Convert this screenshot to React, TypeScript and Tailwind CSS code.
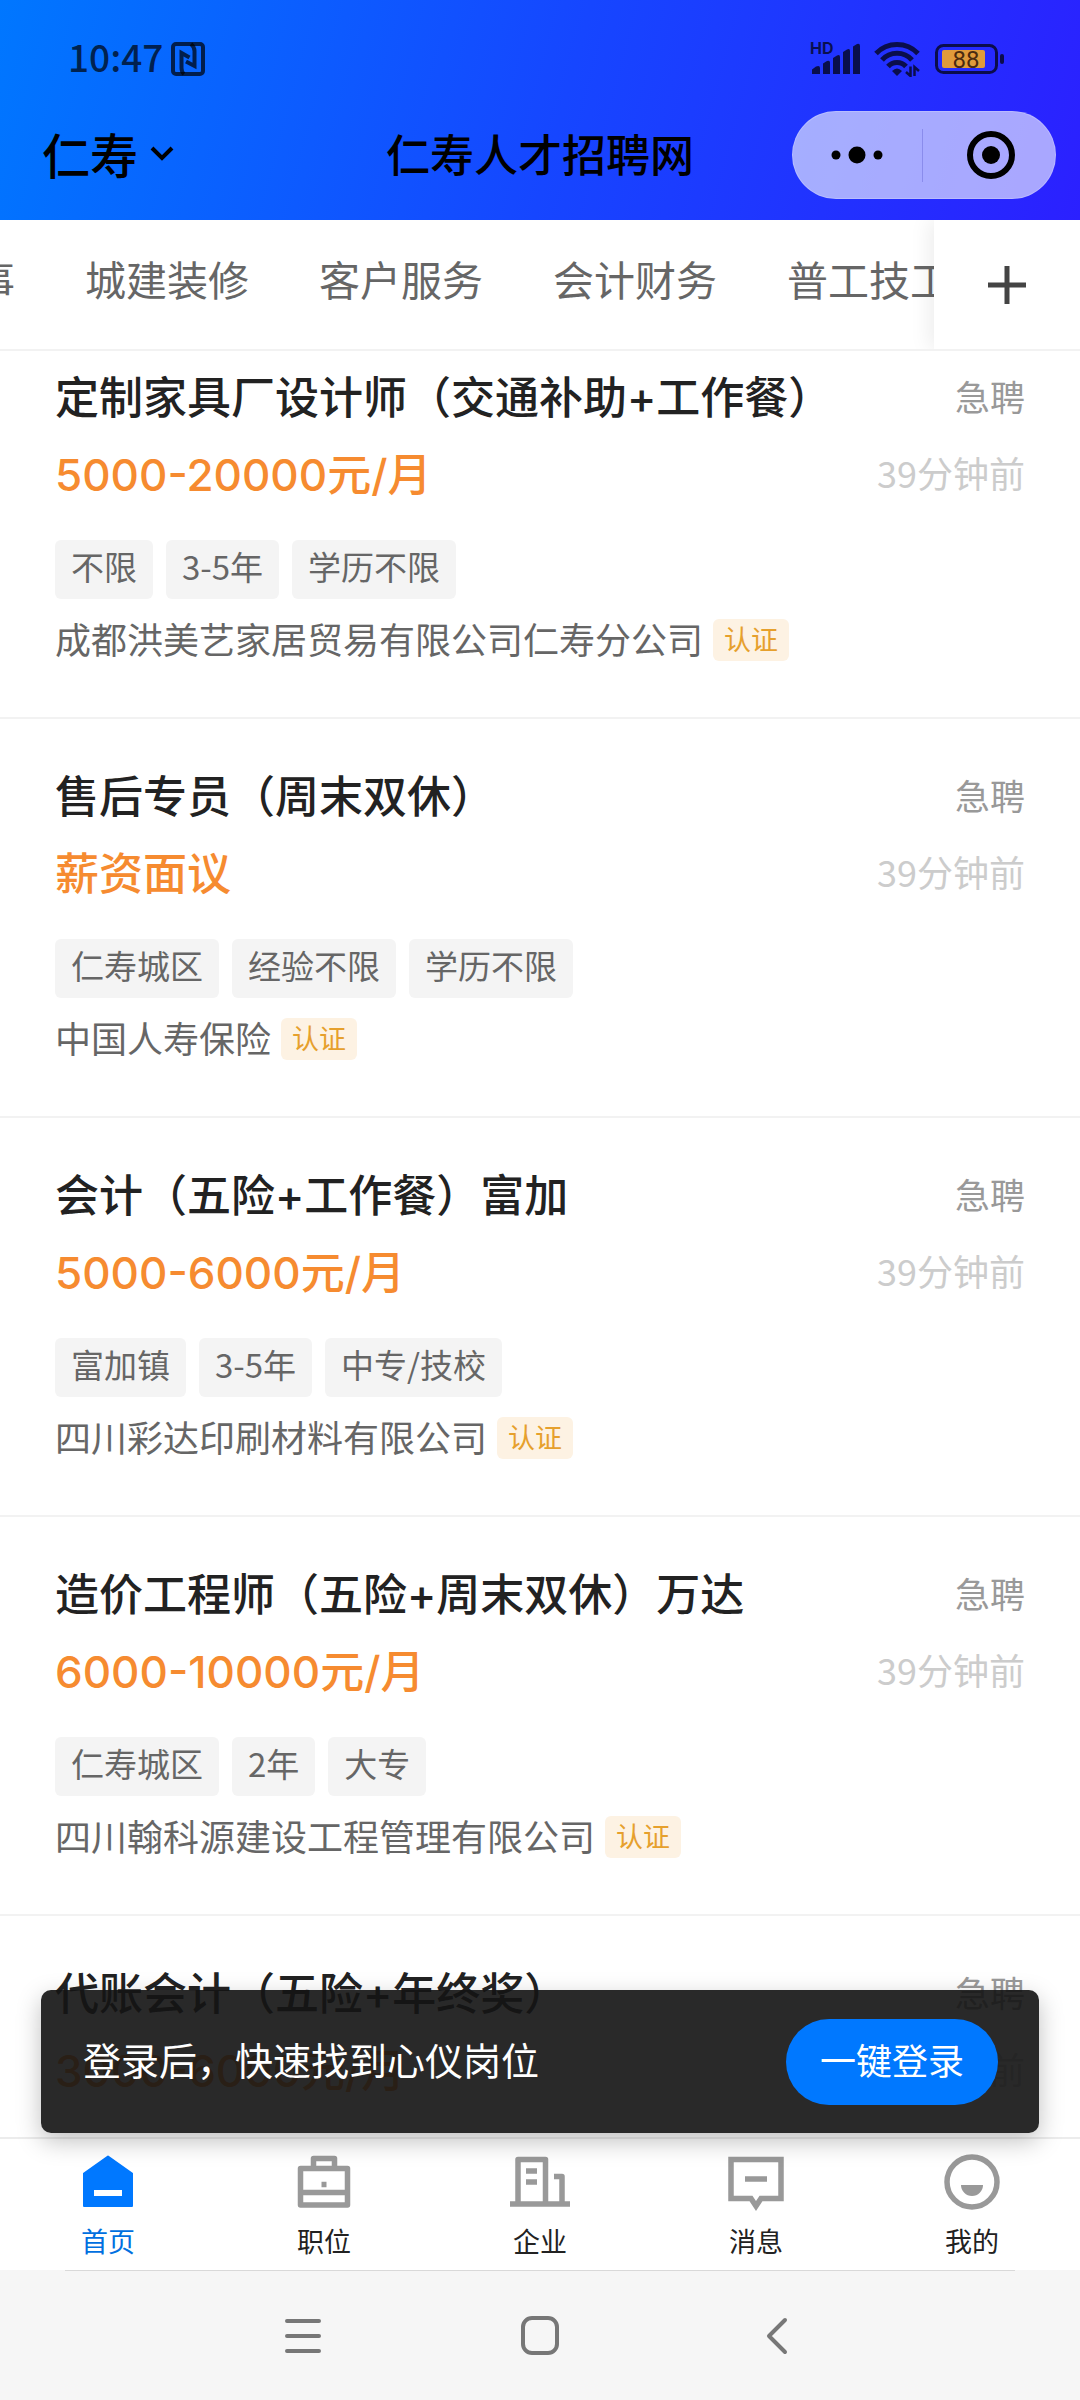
import { ReactNode } from "react";

type Job = {
  title: string;
  salary: string;
  tags: string[];
  company: string;
};

const categories = ["行政人事", "城建装修", "客户服务", "会计财务", "普工技工"];

const jobs: Job[] = [
  {
    title: "定制家具厂设计师（交通补助+工作餐）",
    salary: "5000-20000元/月",
    tags: ["不限", "3-5年", "学历不限"],
    company: "成都洪美艺家居贸易有限公司仁寿分公司",
  },
  {
    title: "售后专员（周末双休）",
    salary: "薪资面议",
    tags: ["仁寿城区", "经验不限", "学历不限"],
    company: "中国人寿保险",
  },
  {
    title: "会计（五险+工作餐）富加",
    salary: "5000-6000元/月",
    tags: ["富加镇", "3-5年", "中专/技校"],
    company: "四川彩达印刷材料有限公司",
  },
  {
    title: "造价工程师（五险+周末双休）万达",
    salary: "6000-10000元/月",
    tags: ["仁寿城区", "2年", "大专"],
    company: "四川翰科源建设工程管理有限公司",
  },
  {
    title: "代账会计（五险+年终奖）",
    salary: "3000-6000元/月",
    tags: [],
    company: "",
  },
];

function StatusBar() {
  return (
    <div className="flex h-[117px] items-center justify-between pr-[75px] pl-[68px] text-black/70">
      <div className="flex items-center gap-2">
        <span className="pb-1 text-[37px] leading-none font-medium">10:47</span>
        <svg className="h-[34px] w-[34px]" viewBox="0 0 34 34" fill="none" stroke="currentColor">
          <rect x="2" y="2" width="30" height="30" rx="3" strokeWidth="4" />
          <path d="M18.500 15.500L10.500 11V26Q10.500 30 13 32" strokeWidth="4" />
          <path d="M15 19.500L23.500 24V9Q23.500 5 20 2" strokeWidth="4" />
        </svg>
      </div>
      <div className="flex items-center gap-3.5">
        <svg className="h-9 w-[50px] overflow-visible" viewBox="0 0 50 36" fill="currentColor">
          <text x="0" y="13" fontSize="16" fontWeight="700" fontFamily="Inter, sans-serif">HD</text>
          <path d="M2 33V28.500L6 25.500Q10 24 10 27V33ZM13 33V22.500L17 20Q20 19 20 21.500V33ZM23 33V17L27 14.500Q30 13 30 16V33ZM33 33V11L37 8.500Q40 7 40 10V33ZM43 33V5.500L47 3Q50 2 50 5V33Z" />
        </svg>
        <svg className="h-9 w-[47px]" viewBox="0 0 47 36" fill="none" stroke="currentColor" strokeWidth="5">
          <path d="M2 12.500A29 29 0 0 1 44 12.500" />
          <path d="M8 19A20 20 0 0 1 38 19" />
          <path d="M14 25.500A12 12 0 0 1 32 25.500" />
          <path d="M18 30Q23 25 28 30L23 35Z" fill="currentColor" stroke="none" />
          <path d="M36.500 25.500V35L32 31M40.500 35V26L45 30" strokeWidth="2.500" />
        </svg>
        <svg className="h-[30px] w-[70px]" viewBox="0 0 70 30">
          <rect x="1.500" y="1.500" width="60" height="27" rx="7" fill="none" stroke="currentColor" strokeWidth="3" />
          <rect x="7" y="6" width="43" height="18" rx="2" fill="#e09b3b" />
          <rect x="65" y="10" width="4" height="10" rx="2" fill="currentColor" />
          <text x="31" y="23.500" fontSize="24" textAnchor="middle" fill="#4a2a10" fontFamily="Roboto, sans-serif">88</text>
        </svg>
      </div>
    </div>
  );
}

function Header() {
  return (
    <header className="h-[220px] bg-linear-[105deg] from-[#0077ff] via-[#1646ff] via-52% to-[#2b20ff]">
      <StatusBar />
      <div className="-mt-1.5 grid grid-cols-[1fr_auto_1fr] items-center px-6">
        <button className="ml-[18px] flex items-center gap-3 justify-self-start pb-1 text-5xl leading-none font-medium">
          仁寿
          <svg className="h-4 w-6" viewBox="0 0 24 16" fill="none" stroke="currentColor" strokeWidth="4">
            <path d="M2 3L12 13L22 3" />
          </svg>
        </button>
        <h1 className="pb-1 text-[44px] leading-none font-medium">仁寿人才招聘网</h1>
        <div className="flex h-[88px] w-[264px] items-center justify-self-end rounded-full border border-white/20 bg-white/60">
          <button className="flex h-full flex-1 items-center justify-center" aria-label="更多">
            <svg className="h-5 w-[52px]" viewBox="0 0 52 20" fill="currentColor">
              <circle cx="5" cy="10" r="4.500" />
              <circle cx="26" cy="10" r="8.500" />
              <circle cx="47" cy="10" r="4.500" />
            </svg>
          </button>
          <span className="h-[53px] w-px bg-[#8a8cec]" />
          <button className="flex h-full flex-1 items-center justify-center pl-1" aria-label="关闭">
            <svg className="h-[50px] w-[50px]" viewBox="0 0 50 50">
              <circle cx="25" cy="25" r="21" fill="none" stroke="currentColor" strokeWidth="6" />
              <circle cx="25" cy="25" r="9" fill="currentColor" />
            </svg>
          </button>
        </div>
      </div>
    </header>
  );
}

function CategoryBar() {
  return (
    <div className="flex h-[131px] overflow-hidden border-b-2 border-[#f2f2f2] bg-white">
      <div className="flex min-w-0 flex-1 items-center overflow-hidden">
        <div className="-ml-[149px] flex shrink-0 gap-[70px] pb-3">
          {categories.map((name) => (
            <button key={name} className="text-[41px] leading-none whitespace-nowrap text-[#666]">
              {name}
            </button>
          ))}
        </div>
      </div>
      <button
        className="relative flex w-[146px] items-center justify-center bg-white shadow-[-4px_0_20px_rgba(0,0,0,0.08)]"
        aria-label="更多分类"
      >
        <svg className="h-[38px] w-[38px]" viewBox="0 0 38 38" stroke="#444" strokeWidth="5">
          <path d="M19 0V38M0 19H38" />
        </svg>
      </button>
    </div>
  );
}

function JobCard({ job }: { job: Job }) {
  return (
    <li className="h-[399px] border-b-2 border-[#f2f2f2] px-[55px] pt-[51px]">
      <div className="flex h-[54px] items-center justify-between">
        <h2 className="font-[Inter,'Noto_Sans_CJK_SC',sans-serif] text-[44px] leading-none font-medium text-[#222]">
          {job.title}
        </h2>
        <span className="pb-1.5 text-[35px] leading-none text-[#999]">急聘</span>
      </div>
      <div className="mt-[23px] flex h-[54px] items-center justify-between">
        <p className="font-[Inter,'Noto_Sans_CJK_SC',sans-serif] text-[44px] leading-none font-medium text-[#f68b30]">
          {job.salary}
        </p>
        <span className="pb-1.5 text-4xl leading-none text-[#ccc]">39分钟前</span>
      </div>
      <div className="mt-[38px] flex gap-[13px]">
        {job.tags.map((tag) => (
          <span key={tag} className="flex h-[59px] items-center rounded-md bg-[#f4f4f4] px-4 pb-1.5 text-[33px] leading-none text-[#666]">
            {tag}
          </span>
        ))}
      </div>
      {job.company && (
        <div className="mt-5 flex items-center gap-2.5">
          <span className="pb-1 text-4xl leading-none text-[#666]">{job.company}</span>
          <span className="flex h-[42px] items-center rounded-md bg-[#fdf2e3] px-[11px] pb-1 text-[27px] leading-none text-[#e6a02d]">
            认证
          </span>
        </div>
      )}
    </li>
  );
}

function LoginToast() {
  return (
    <div className="absolute inset-x-[41px] bottom-1 flex h-[143px] items-center justify-between rounded-[10px] bg-[#141414]/91 pr-[41px] pl-[42px] shadow-[0_8px_24px_rgba(0,0,0,0.25)]">
      <p className="pb-1.5 text-[38px] leading-none text-white">登录后，快速找到心仪岗位</p>
      <button className="h-[86px] w-[212px] rounded-full bg-[#0078ff] pb-1.5 text-4xl leading-none text-white">
        一键登录
      </button>
    </div>
  );
}

function TabItem({ label, active, children }: { label: string; active?: boolean; children: ReactNode }) {
  return (
    <a href="#" className={`flex flex-1 flex-col items-center gap-3.5 pt-3.5 ${active ? "text-[#0078ff]" : "text-[#999]"}`}>
      <svg className="h-[60px] w-[60px]" viewBox="0 0 60 60" fill="none" stroke="currentColor" strokeWidth="5.500">
        {children}
      </svg>
      <span className={`text-[27px] leading-none ${active ? "text-[#0070e0]" : "text-[#222]"}`}>{label}</span>
    </a>
  );
}

function TabBar() {
  return (
    <nav className="flex h-[133px] border-t-2 border-[#ececec] bg-white">
      <TabItem label="首页" active>
        <path d="M30 3.500L54 20.500V53H6V20.500Z" fill="currentColor" strokeWidth="2" strokeLinejoin="round" />
        <path d="M16 40H44" stroke="#fff" strokeWidth="6" />
      </TabItem>
      <TabItem label="职位">
        <path d="M6.500 15.500H53.500V52H6.500ZM19.500 15V5.500H40.500V15M6 39.500H54" strokeLinejoin="round" />
        <path d="M27.500 31.500H32.500" />
      </TabItem>
      <TabItem label="企业">
        <path d="M0 51H60M8 51V6.500H35.500V51M44 23.500H52V51" strokeLinejoin="round" />
        <path d="M16 18H27M16 29H27" />
      </TabItem>
      <TabItem label="消息">
        <path d="M5 6.500H55V45.500H35L30 53L25 45.500H5Z" strokeMiterlimit="10" />
        <path d="M19 26H41" />
      </TabItem>
      <TabItem label="我的">
        <circle cx="30" cy="29" r="25" />
        <path d="M19 32H41A11 11 0 0 1 19 32Z" fill="currentColor" stroke="none" />
      </TabItem>
    </nav>
  );
}

function SystemNav() {
  return (
    <div className="h-[130px] bg-[#f6f6f6] text-[#777]">
      <div className="mx-[65px] h-px bg-[#d9d9d9]" />
      <div className="flex justify-center gap-[197px] pt-[45px]">
        <button className="h-10 w-10" aria-label="最近任务">
          <svg viewBox="0 0 40 40" stroke="currentColor" strokeWidth="4" strokeLinecap="round">
            <path d="M4 5H36M4 20H36M4 35H36" />
          </svg>
        </button>
        <button className="h-10 w-10" aria-label="主屏幕">
          <svg viewBox="0 0 40 40" fill="none" stroke="currentColor" strokeWidth="4">
            <rect x="3" y="2" width="34" height="35" rx="9" />
          </svg>
        </button>
        <button className="h-10 w-10" aria-label="返回">
          <svg viewBox="0 0 40 40" fill="none" stroke="currentColor" strokeWidth="4" strokeLinecap="round" strokeLinejoin="round">
            <path d="M28 4L12 20L28 36" />
          </svg>
        </button>
      </div>
    </div>
  );
}

export default function App() {
  return (
    <div className="flex h-screen flex-col overflow-hidden bg-white font-['Noto_Sans_CJK_SC',sans-serif] text-black">
      <Header />
      <CategoryBar />
      <main className="relative z-10 min-h-0 flex-1">
        <div className="h-full overflow-hidden">
          <ul className="-mt-[31px]">
            {jobs.map((job) => (
              <JobCard key={job.title} job={job} />
            ))}
          </ul>
        </div>
        <LoginToast />
      </main>
      <TabBar />
      <SystemNav />
    </div>
  );
}
